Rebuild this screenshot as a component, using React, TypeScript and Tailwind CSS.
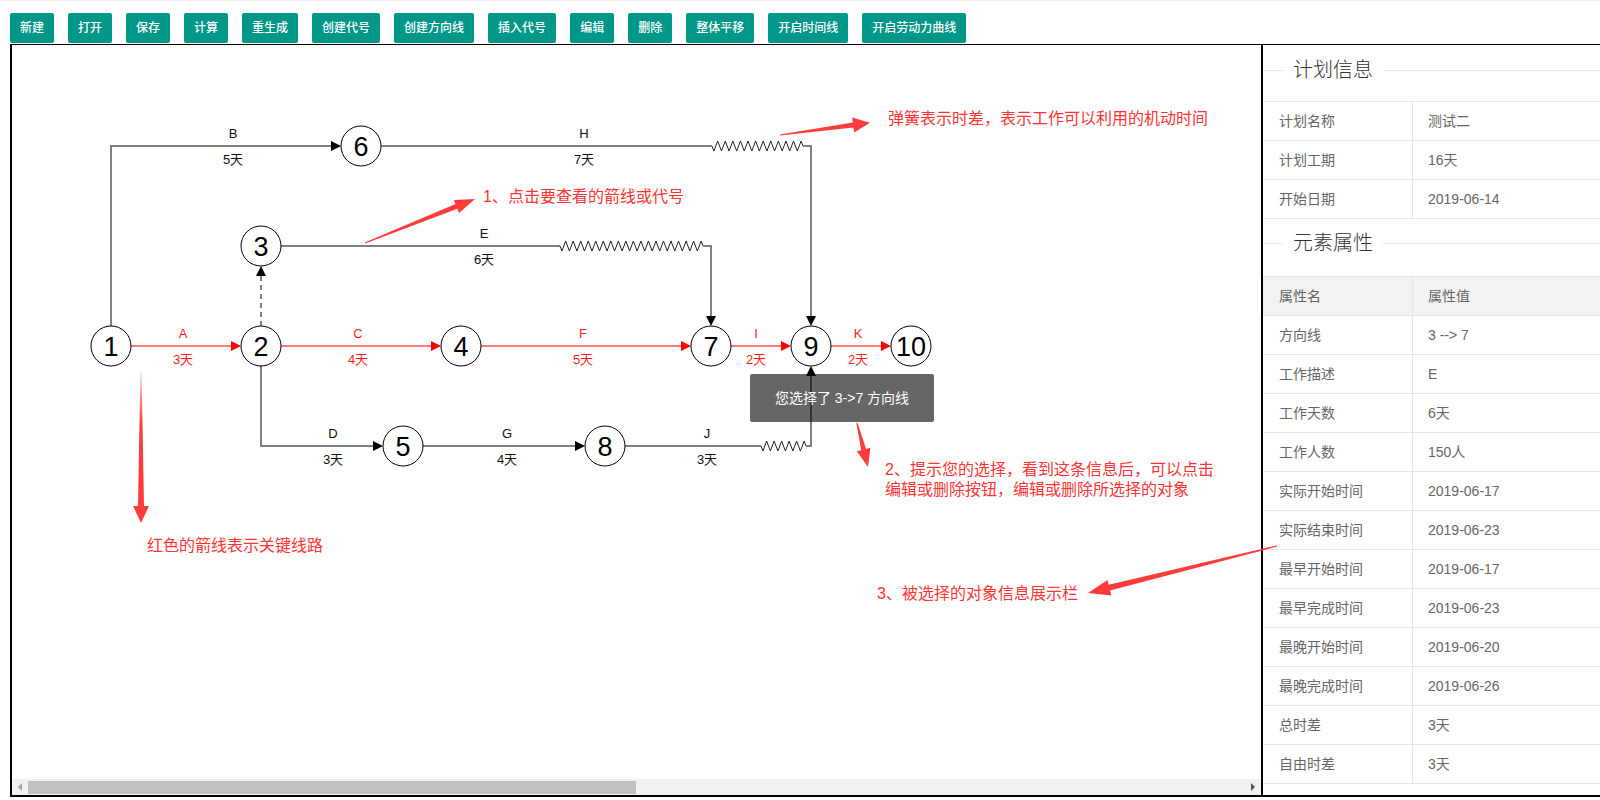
import React from "react";

const G = "#808080";
const RL = "#ff7a7a";
const RH = "#ff0000";
const AR = "#ff3b3b";

const buttons = ["新建", "打开", "保存", "计算", "重生成", "创建代号", "创建方向线", "插入代号", "编辑", "删除", "整体平移", "开启时间线", "开启劳动力曲线"];

const nodes = [
  { id: "1", x: 111, y: 346 },
  { id: "2", x: 261, y: 346 },
  { id: "3", x: 261, y: 246 },
  { id: "4", x: 461, y: 346 },
  { id: "5", x: 403, y: 446 },
  { id: "6", x: 361, y: 146 },
  { id: "7", x: 711, y: 346 },
  { id: "8", x: 605, y: 446 },
  { id: "9", x: 811, y: 346 },
  { id: "10", x: 911, y: 346 },
];

const labels: { x: number; y: number; name: string; days: string; red?: boolean }[] = [
  { x: 183, y: 346, name: "A", days: "3天", red: true },
  { x: 233, y: 146, name: "B", days: "5天" },
  { x: 358, y: 346, name: "C", days: "4天", red: true },
  { x: 333, y: 446, name: "D", days: "3天" },
  { x: 484, y: 246, name: "E", days: "6天" },
  { x: 583, y: 346, name: "F", days: "5天", red: true },
  { x: 507, y: 446, name: "G", days: "4天" },
  { x: 584, y: 146, name: "H", days: "7天" },
  { x: 756, y: 346, name: "I", days: "2天", red: true },
  { x: 707, y: 446, name: "J", days: "3天" },
  { x: 858, y: 346, name: "K", days: "2天", red: true },
];

function spring(x0: number, x1: number, y: number) {
  const n = Math.max(1, Math.round((x1 - x0) / 7.6));
  const p = (x1 - x0) / n;
  const pts: string[] = [`${x0},${y}`];
  for (let k = 0; k < n; k++) {
    pts.push(`${x0 + (k + 0.25) * p},${y + 5}`);
    pts.push(`${x0 + (k + 0.75) * p},${y - 5}`);
  }
  pts.push(`${x1},${y}`);
  return <polyline points={pts.join(" ")} fill="none" stroke="#222" strokeWidth={1} />;
}

function head(x: number, y: number, dir: "r" | "u" | "d", color = "#000") {
  let pts = "";
  if (dir === "r") pts = `${x},${y} ${x - 10},${y - 5} ${x - 10},${y + 5}`;
  if (dir === "u") pts = `${x},${y} ${x - 5},${y + 10} ${x + 5},${y + 10}`;
  if (dir === "d") pts = `${x},${y} ${x - 5},${y - 10} ${x + 5},${y - 10}`;
  return <polygon points={pts} fill={color} />;
}

function fatArrow(tx: number, ty: number, px: number, py: number, L: number, H: number, S: number, fill: string) {
  const dx = px - tx;
  const dy = py - ty;
  const len = Math.hypot(dx, dy);
  const ux = dx / len;
  const uy = dy / len;
  const nx = -uy;
  const ny = ux;
  const bx = px - ux * L;
  const by = py - uy * L;
  const pts = [
    [tx + nx * 0.6, ty + ny * 0.6],
    [bx + nx * S, by + ny * S],
    [bx + nx * H, by + ny * H],
    [px, py],
    [bx - nx * H, by - ny * H],
    [bx - nx * S, by - ny * S],
    [tx - nx * 0.6, ty - ny * 0.6],
  ];
  return <polygon points={pts.map((q) => q.join(",")).join(" ")} fill={fill} />;
}

function Legend({ title }: { title: string }) {
  return (
    <div className="flex h-[28px] items-center">
      <div className="h-px w-[20px] bg-[#e6e6e6]" />
      <div className="px-[10px] text-[20px] font-light leading-[28px] text-[#333]">{title}</div>
      <div className="h-px flex-1 bg-[#e6e6e6]" />
    </div>
  );
}

function Row({ k, v, header }: { k: string; v: string; header?: boolean }) {
  return (
    <div className={`flex h-[39px] border-b border-[#e6e6e6] text-[14px] text-[#666] ${header ? "bg-[#f2f2f2]" : ""}`}>
      <div className="flex w-[150px] shrink-0 items-center border-r border-[#e6e6e6] pl-[16px]">{k}</div>
      <div className="flex flex-1 items-center pl-[15px]">{v}</div>
    </div>
  );
}

const plan = [
  ["计划名称", "测试二"],
  ["计划工期", "16天"],
  ["开始日期", "2019-06-14"],
];

const props = [
  ["方向线", "3 --> 7"],
  ["工作描述", "E"],
  ["工作天数", "6天"],
  ["工作人数", "150人"],
  ["实际开始时间", "2019-06-17"],
  ["实际结束时间", "2019-06-23"],
  ["最早开始时间", "2019-06-17"],
  ["最早完成时间", "2019-06-23"],
  ["最晚开始时间", "2019-06-20"],
  ["最晚完成时间", "2019-06-26"],
  ["总时差", "3天"],
  ["自由时差", "3天"],
];

export default function App() {
  return (
    <div className="relative h-[800px] w-[1600px] overflow-hidden bg-white font-['Liberation_Sans','Noto_Sans_CJK_SC',sans-serif]">
      <div className="h-px bg-[#f0f0f0]" />
      <div className="flex h-[43px] gap-[14px] pl-[10px] pt-[12px]">
        {buttons.map((b) => (
          <div key={b} className="flex h-[30px] items-center rounded-[2px] bg-[#009688] px-[10px] text-[12px] font-medium text-white">
            {b}
          </div>
        ))}
      </div>
      <div className="ml-[10px] flex h-[753px] border-b-2 border-l-2 border-t border-black">
        <div className="flex w-[1251px] shrink-0 flex-col border-r-2 border-black">
          <div className="relative flex-1 overflow-hidden">
            <svg width={1249} height={734} viewBox="12 45 1249 734" className="block">
              <polyline points="111,326 111,146 331,146" fill="none" stroke={G} strokeWidth={2} />
              {head(341, 146, "r")}
              <line x1={381} y1={146} x2={712} y2={146} stroke={G} strokeWidth={2} />
              {spring(712, 803, 146)}
              <polyline points="803,146 811,146 811,316" fill="none" stroke={G} strokeWidth={2} />
              {head(811, 326, "d")}
              <line x1={281} y1={246} x2={560} y2={246} stroke={G} strokeWidth={2} />
              {spring(560, 703, 246)}
              <polyline points="703,246 711,246 711,316" fill="none" stroke={G} strokeWidth={2} />
              {head(711, 326, "d")}
              <line x1={261} y1={326} x2={261} y2={276} stroke={G} strokeWidth={2} strokeDasharray="5 4" />
              {head(261, 266, "u")}
              <polyline points="261,366 261,446 373,446" fill="none" stroke={G} strokeWidth={2} />
              {head(383, 446, "r")}
              <line x1={423} y1={446} x2={575} y2={446} stroke={G} strokeWidth={2} />
              {head(585, 446, "r")}
              <line x1={625} y1={446} x2={761} y2={446} stroke={G} strokeWidth={2} />
              {spring(761, 806, 446)}
              <polyline points="806,446 811,446 811,376" fill="none" stroke={G} strokeWidth={2} />
              {head(811, 366, "u")}
              <line x1={131} y1={346} x2={231} y2={346} stroke={RL} strokeWidth={2} />
              {head(241, 346, "r", RH)}
              <line x1={281} y1={346} x2={431} y2={346} stroke={RL} strokeWidth={2} />
              {head(441, 346, "r", RH)}
              <line x1={481} y1={346} x2={681} y2={346} stroke={RL} strokeWidth={2} />
              {head(691, 346, "r", RH)}
              <line x1={731} y1={346} x2={781} y2={346} stroke={RL} strokeWidth={2} />
              {head(791, 346, "r", RH)}
              <line x1={831} y1={346} x2={881} y2={346} stroke={RL} strokeWidth={2} />
              {head(891, 346, "r", RH)}
              {nodes.map((n) => (
                <g key={n.id}>
                  <circle cx={n.x} cy={n.y} r={20} fill="#fff" stroke="#000" strokeWidth={1} />
                  <text x={n.x} y={n.y + 1} textAnchor="middle" dominantBaseline="central" fontSize={27} fill="#000">
                    {n.id}
                  </text>
                </g>
              ))}
              {labels.map((l) => (
                <g key={l.name} fontSize={13} fill={l.red ? "#ff1a1a" : "#111"} textAnchor="middle">
                  <text x={l.x} y={l.y - 13} dominantBaseline="central">
                    {l.name}
                  </text>
                  <text x={l.x} y={l.y + 13} dominantBaseline="central">
                    {l.days}
                  </text>
                </g>
              ))}
              <g fontSize={16} fill="#ff3333" dominantBaseline="central">
                <text x={888} y={118}>弹簧表示时差，表示工作可以利用的机动时间</text>
                <text x={483} y={196}>1、点击要查看的箭线或代号</text>
                <text x={147} y={545}>红色的箭线表示关键线路</text>
                <text x={885} y={469}>2、提示您的选择，看到这条信息后，可以点击</text>
                <text x={885} y={489}>编辑或删除按钮，编辑或删除所选择的对象</text>
                <text x={877} y={593}>3、被选择的对象信息展示栏</text>
              </g>
            </svg>
            <div className="absolute left-[738px] top-[329px] flex h-[48px] w-[184px] items-center justify-center rounded-[2px] bg-black/60 text-[14px] text-white">
              您选择了 3-&gt;7 方向线
            </div>
          </div>
          <div className="flex h-[16px] items-center bg-[#f1f1f1]">
            <div className="flex h-[16px] w-[16px] items-center justify-center">
              <div className="h-0 w-0 border-y-[4px] border-r-[4px] border-y-transparent border-r-[#a3a3a3]" />
            </div>
            <div className="h-[13px] w-[608px] bg-[#c1c1c1]" />
            <div className="flex-1" />
            <div className="flex h-[16px] w-[16px] items-center justify-center">
              <div className="h-0 w-0 border-y-[4px] border-l-[4px] border-y-transparent border-l-[#505050]" />
            </div>
          </div>
        </div>
        <div className="min-w-0 flex-1 pt-[11px]">
          <Legend title="计划信息" />
          <div className="mt-[17px] border-t border-[#e6e6e6]">
            {plan.map(([k, v]) => (
              <Row key={k} k={k} v={v} />
            ))}
          </div>
          <div className="mt-[10px]">
            <Legend title="元素属性" />
          </div>
          <div className="mt-[19px] border-t border-[#e6e6e6]">
            <Row k="属性名" v="属性值" header />
            {props.map(([k, v]) => (
              <Row key={k} k={k} v={v} />
            ))}
          </div>
        </div>
      </div>
      <svg width={1600} height={800} className="pointer-events-none absolute left-0 top-0">
        <defs>
          <linearGradient id="fade" x1="0" y1="0" x2="0" y2="1">
            <stop offset="0" stopColor="#ffd6d6" />
            <stop offset="0.35" stopColor={AR} />
            <stop offset="1" stopColor={AR} />
          </linearGradient>
        </defs>
        {fatArrow(780, 135, 870, 122.7, 17, 7.5, 2.5, AR)}
        {fatArrow(365, 243, 475, 199, 20, 7, 2.5, AR)}
        {fatArrow(141, 372, 141, 523, 17, 8, 3, "url(#fade)")}
        {fatArrow(857, 423, 868, 467, 18, 7, 2.5, AR)}
        {fatArrow(1277, 546, 1088, 593, 22, 8, 3, AR)}
      </svg>
    </div>
  );
}
